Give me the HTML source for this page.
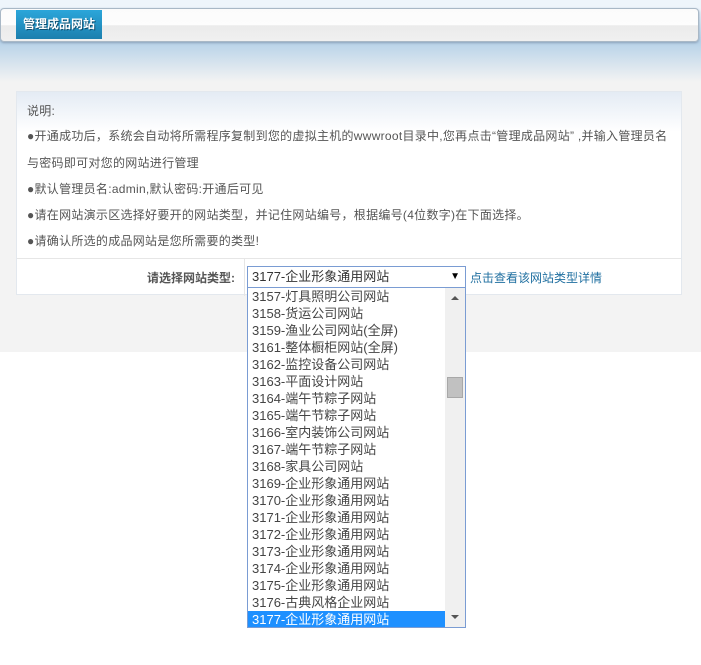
<!DOCTYPE html>
<html><head><meta charset="utf-8"><style>
*{margin:0;padding:0;box-sizing:border-box}
body{width:701px;height:665px;position:relative;background:#fff;font-family:"Liberation Sans","Noto Sans CJK SC",sans-serif;overflow:hidden}
.bg{position:absolute;left:0;top:0;width:701px;height:352px;background:linear-gradient(#eef5fb 0,#eef5fb 8px,#b7d2e8 42px,#f3f3f3 82px,#f3f3f3 100%)}
.bar{position:absolute;left:0;top:8px;width:699px;height:34px;border:1px solid #a9b8c6;border-radius:4px;background:linear-gradient(#fbfbfb 0,#fdfdfd 50%,#ebebeb 52%,#f0f0f0 100%);box-shadow:0 1px 2px #8aa0b8}
.tab{position:absolute;left:16px;top:10px;width:86px;height:29px;background:linear-gradient(#2ba6da,#1c7fae);color:#fff;font-weight:bold;font-size:12px;line-height:29px;text-align:center;text-shadow:1px 1px 0 #0d4d6e}
.panel{position:absolute;left:16px;top:91px;width:666px;height:204px;border:1px solid #e3e8ee;background:linear-gradient(#e4ebf4 0,#fff 40px,#fff 100%)}
.t{position:absolute;left:10px;font-size:12px;color:#555;white-space:nowrap;letter-spacing:0.28px}
.row{position:absolute;left:0;top:166px;width:664px;height:37px;border-top:1px solid #e6e6e6}
.vl{position:absolute;left:227px;top:0;height:37px;border-left:1px solid #e6e6e6}
.lbl{position:absolute;left:130px;top:10px;font-size:12px;color:#555;font-weight:bold}
.sel{position:absolute;left:247px;top:266px;width:219px;height:22px;border:1px solid #7a9cd3;background:#fff;font-size:13px;color:#333;line-height:20px;padding-left:4px}
.sel b{position:absolute;right:5px;top:0;font-size:10px;color:#000}
.lk{position:absolute;left:470px;top:269px;font-size:12px;color:#1f6fa0}
.dd{position:absolute;left:247px;top:287px;width:219px;height:341px;border:1px solid #7a9cd3;background:#fff;overflow:hidden}
.dd p{height:17px;line-height:17px;font-size:13px;color:#444;padding-left:4px;width:197px}
.dd p.s{background:#1e90ff;color:#fff}
.sb{position:absolute;right:0;top:0;width:20px;height:339px;background:#f0f0f0}
.th{position:absolute;left:2px;top:89px;width:16px;height:21px;background:#c1c1c1;border:1px solid #a8a8a8}
.ar{position:absolute;left:6px;width:0;height:0;border-left:4px solid transparent;border-right:4px solid transparent}
</style></head><body>
<div class="bg"></div>
<div class="bar"></div>
<div class="tab">管理成品网站</div>
<div class="panel">
<div class="t" style="top:10px">说明:</div>
<div class="t" style="top:35px">●开通成功后，系统会自动将所需程序复制到您的虚拟主机的wwwroot目录中,您再点击“管理成品网站” ,并输入管理员名</div>
<div class="t" style="top:62px">与密码即可对您的网站进行管理</div>
<div class="t" style="top:88px">●默认管理员名:admin,默认密码:开通后可见</div>
<div class="t" style="top:114px">●请在网站演示区选择好要开的网站类型，并记住网站编号，根据编号(4位数字)在下面选择。</div>
<div class="t" style="top:140px">●请确认所选的成品网站是您所需要的类型!</div>
<div class="row"><div class="vl"></div><div class="lbl">请选择网站类型:</div></div>
</div>
<div class="sel">3177-企业形象通用网站<b>▼</b></div>
<div class="lk">点击查看该网站类型详情</div>
<div class="dd">
<p>3157-灯具照明公司网站</p><p>3158-货运公司网站</p><p>3159-渔业公司网站(全屏)</p><p>3161-整体橱柜网站(全屏)</p><p>3162-监控设备公司网站</p><p>3163-平面设计网站</p><p>3164-端午节粽子网站</p><p>3165-端午节粽子网站</p><p>3166-室内装饰公司网站</p><p>3167-端午节粽子网站</p><p>3168-家具公司网站</p><p>3169-企业形象通用网站</p><p>3170-企业形象通用网站</p><p>3171-企业形象通用网站</p><p>3172-企业形象通用网站</p><p>3173-企业形象通用网站</p><p>3174-企业形象通用网站</p><p>3175-企业形象通用网站</p><p>3176-古典风格企业网站</p><p class="s">3177-企业形象通用网站</p>
<div class="sb"><span class="ar" style="top:8px;border-bottom:4px solid #555"></span><div class="th"></div><span class="ar" style="top:327px;border-top:4px solid #555"></span></div>
</div>
</body></html>
